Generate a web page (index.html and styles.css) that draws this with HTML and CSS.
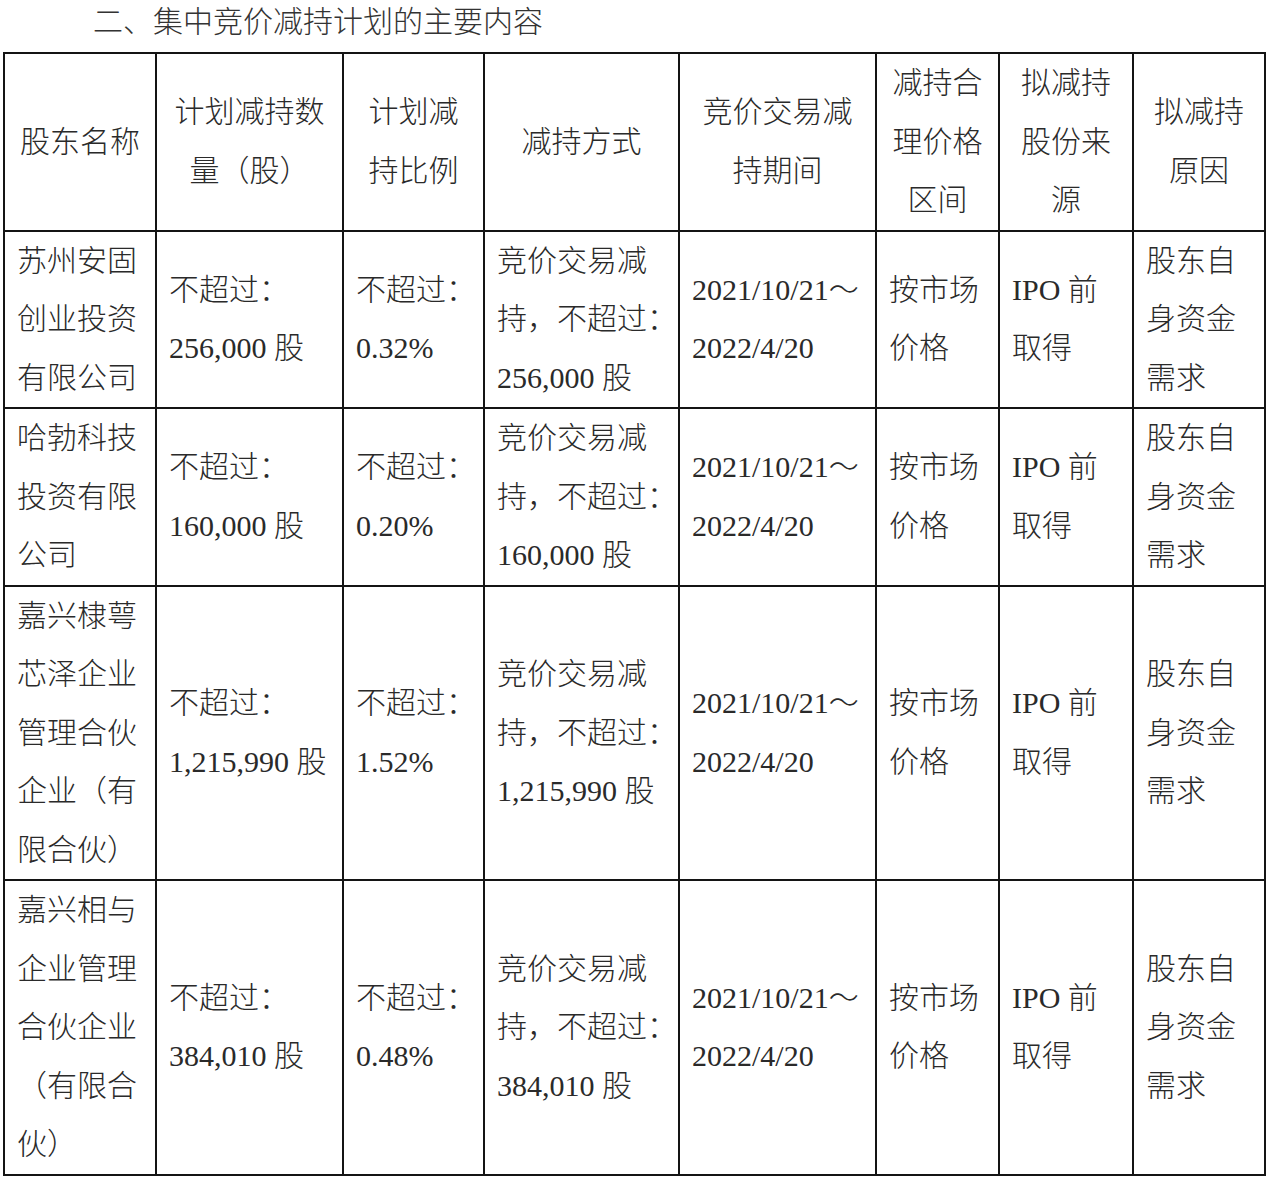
FILE: index.html
```html
<!DOCTYPE html>
<html lang="zh-CN">
<head>
<meta charset="utf-8">
<title>集中竞价减持计划的主要内容</title>
<link rel="stylesheet" href="styles.css">
</head>
<body>
<div class="page">
  <h2 class="title">二、集中竞价减持计划的主要内容</h2>
  <table class="plan">
    <colgroup>
      <col class="c-name"><col class="c-qty"><col class="c-ratio"><col class="c-way">
      <col class="c-period"><col class="c-price"><col class="c-source"><col class="c-reason">
    </colgroup>
    <thead>
      <tr>
        <th>股东名称</th>
        <th>计划减持数<br>量（股）</th>
        <th>计划减<br>持比例</th>
        <th>减持方式</th>
        <th>竞价交易减<br>持期间</th>
        <th>减持合<br>理价格<br>区间</th>
        <th>拟减持<br>股份来<br>源</th>
        <th>拟减持<br>原因</th>
      </tr>
    </thead>
    <tbody>
      <tr>
        <td>苏州安固<br>创业投资<br>有限公司</td>
        <td>不超过：<br>256,000 股</td>
        <td>不超过：<br>0.32%</td>
        <td>竞价交易减<br>持，不超过：<br>256,000 股</td>
        <td>2021/10/21～<br>2022/4/20</td>
        <td>按市场<br>价格</td>
        <td>IPO 前<br>取得</td>
        <td>股东自<br>身资金<br>需求</td>
      </tr>
      <tr>
        <td>哈勃科技<br>投资有限<br>公司</td>
        <td>不超过：<br>160,000 股</td>
        <td>不超过：<br>0.20%</td>
        <td>竞价交易减<br>持，不超过：<br>160,000 股</td>
        <td>2021/10/21～<br>2022/4/20</td>
        <td>按市场<br>价格</td>
        <td>IPO 前<br>取得</td>
        <td>股东自<br>身资金<br>需求</td>
      </tr>
      <tr>
        <td>嘉兴棣萼<br>芯泽企业<br>管理合伙<br>企业（有<br>限合伙）</td>
        <td>不超过：<br>1,215,990 股</td>
        <td>不超过：<br>1.52%</td>
        <td>竞价交易减<br>持，不超过：<br>1,215,990 股</td>
        <td>2021/10/21～<br>2022/4/20</td>
        <td>按市场<br>价格</td>
        <td>IPO 前<br>取得</td>
        <td>股东自<br>身资金<br>需求</td>
      </tr>
      <tr>
        <td>嘉兴相与<br>企业管理<br>合伙企业<br>（有限合<br>伙）</td>
        <td>不超过：<br>384,010 股</td>
        <td>不超过：<br>0.48%</td>
        <td>竞价交易减<br>持，不超过：<br>384,010 股</td>
        <td>2021/10/21～<br>2022/4/20</td>
        <td>按市场<br>价格</td>
        <td>IPO 前<br>取得</td>
        <td>股东自<br>身资金<br>需求</td>
      </tr>
    </tbody>
  </table>
</div>
</body>
</html>
```

FILE: styles.css
```css
html, body {
  margin: 0;
  padding: 0;
  background: #ffffff;
}

body {
  font-family: "Liberation Serif", "Noto Sans CJK SC", serif;
  color: #2a2a2a;
  font-size: 30px;
}

.page {
  padding-left: 3px;
}

.title {
  margin: 0 0 8px 0;
  font-size: 30px;
  font-weight: 300;
  line-height: 44px;
  text-indent: 90px;
  color: #333333;
}

.plan {
  border-collapse: collapse;
  table-layout: fixed;
  width: 1263px;
  border: 2px solid #141414;
}

.plan th,
.plan td {
  border: 2px solid #141414;
  padding: 0 10px 0 12px;
  line-height: 58.5px;
  vertical-align: middle;
  font-weight: 300;
  white-space: nowrap;
  overflow: hidden;
}

.plan th {
  text-align: center;
  padding: 0 4px;
}

.plan td {
  text-align: left;
}

.c-name { width: 152px; }
.c-qty { width: 187px; }
.c-ratio { width: 141px; }
.c-way { width: 195px; }
.c-period { width: 197px; }
.c-price { width: 123px; }
.c-source { width: 134px; }
.c-reason { width: 132px; }
```
